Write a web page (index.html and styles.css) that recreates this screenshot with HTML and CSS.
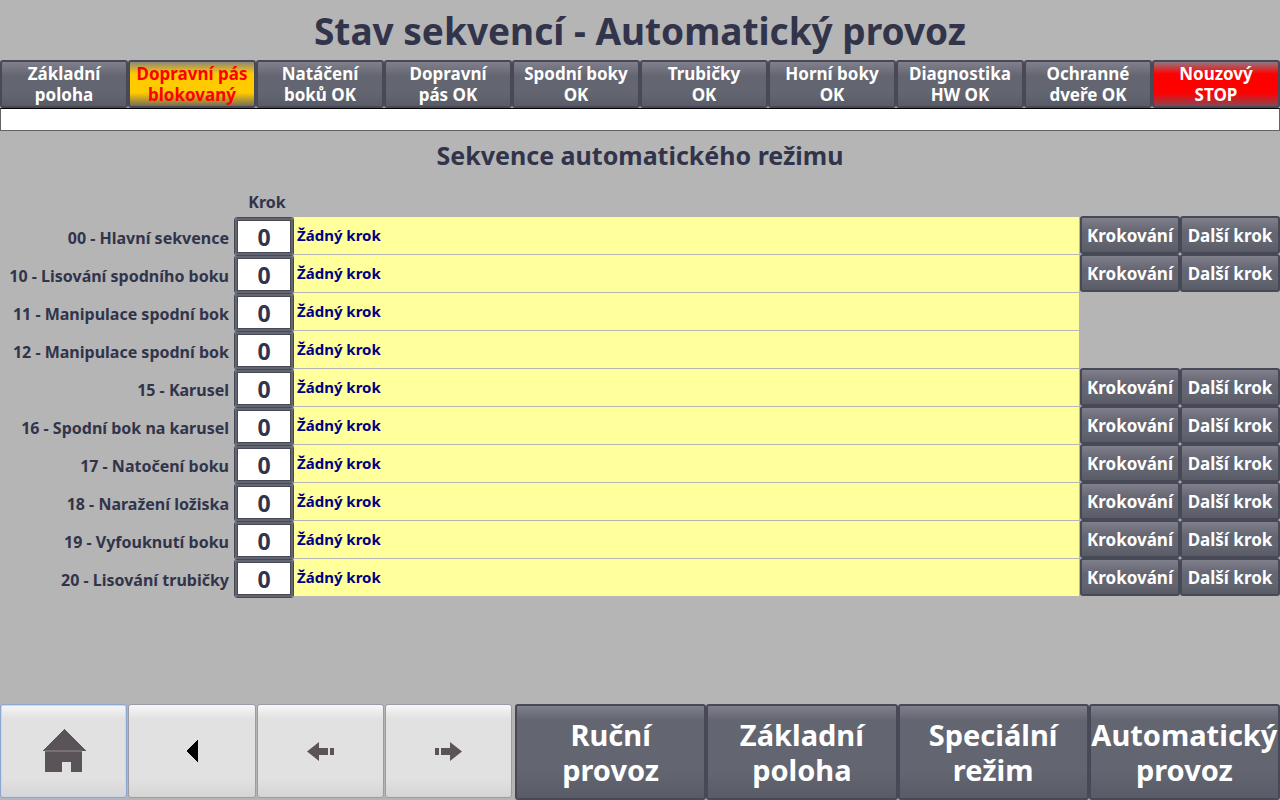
FILE: index.html
```html
<!DOCTYPE html>
<html lang="cs">
<head>
    <meta charset="UTF-8">
    <meta name="viewport" content="width=device-width, initial-scale=1.0">
    <title>Stav sekvencí</title>
    <link rel="stylesheet" href="styles.css">
</head>
<body>
    <h1>Stav sekvencí - Automatický provoz</h1>

    <div class="status">
        <button type="button" class="btn">Základní<br>poloha</button>
        <button type="button" class="btn warning">Dopravní pás<br>blokovaný</button>
        <button type="button" class="btn">Natáčení<br>boků OK</button>
        <button type="button" class="btn">Dopravní<br>pás OK</button>
        <button type="button" class="btn">Spodní boky<br>OK</button>
        <button type="button" class="btn">Trubičky<br>OK</button>
        <button type="button" class="btn">Horní boky<br>OK</button>
        <button type="button" class="btn">Diagnostika<br>HW OK</button>
        <button type="button" class="btn">Ochranné<br>dveře OK</button>
        <button type="button" class="btn alarm">Nouzový<br>STOP</button>
    </div>
    <div class="message" role="status"></div>

    <h2>Sekvence automatického režimu</h2>
    <table class="sequences">
        <colgroup>
            <col class="col-name">
            <col class="col-step">
            <col>
            <col class="col-button">
            <col class="col-button">
        </colgroup>
        <thead>
            <tr>
                <td></td>
                <th scope="col">Krok</th>
                <td></td>
                <td></td>
                <td></td>
            </tr>
        </thead>
        <tbody>
            <tr>
                <th scope="row"><label for="step00">00 - Hlavní sekvence</label></th>
                <td><input type="text" id="step00" value="0" readonly></td>
                <td><div class="text">Žádný krok</div></td>
                <td><button type="button" class="btn">Krokování</button></td>
                <td><button type="button" class="btn">Další krok</button></td>
            </tr>
            <tr>
                <th scope="row"><label for="step10">10 - Lisování spodního boku</label></th>
                <td><input type="text" id="step10" value="0" readonly></td>
                <td><div class="text">Žádný krok</div></td>
                <td><button type="button" class="btn">Krokování</button></td>
                <td><button type="button" class="btn">Další krok</button></td>
            </tr>
            <tr>
                <th scope="row"><label for="step11">11 - Manipulace spodní bok</label></th>
                <td><input type="text" id="step11" value="0" readonly></td>
                <td><div class="text">Žádný krok</div></td>
                <td></td>
                <td></td>
            </tr>
            <tr>
                <th scope="row"><label for="step12">12 - Manipulace spodní bok</label></th>
                <td><input type="text" id="step12" value="0" readonly></td>
                <td><div class="text">Žádný krok</div></td>
                <td></td>
                <td></td>
            </tr>
            <tr>
                <th scope="row"><label for="step15">15 - Karusel</label></th>
                <td><input type="text" id="step15" value="0" readonly></td>
                <td><div class="text">Žádný krok</div></td>
                <td><button type="button" class="btn">Krokování</button></td>
                <td><button type="button" class="btn">Další krok</button></td>
            </tr>
            <tr>
                <th scope="row"><label for="step16">16 - Spodní bok na karusel</label></th>
                <td><input type="text" id="step16" value="0" readonly></td>
                <td><div class="text">Žádný krok</div></td>
                <td><button type="button" class="btn">Krokování</button></td>
                <td><button type="button" class="btn">Další krok</button></td>
            </tr>
            <tr>
                <th scope="row"><label for="step17">17 - Natočení boku</label></th>
                <td><input type="text" id="step17" value="0" readonly></td>
                <td><div class="text">Žádný krok</div></td>
                <td><button type="button" class="btn">Krokování</button></td>
                <td><button type="button" class="btn">Další krok</button></td>
            </tr>
            <tr>
                <th scope="row"><label for="step18">18 - Naražení ložiska</label></th>
                <td><input type="text" id="step18" value="0" readonly></td>
                <td><div class="text">Žádný krok</div></td>
                <td><button type="button" class="btn">Krokování</button></td>
                <td><button type="button" class="btn">Další krok</button></td>
            </tr>
            <tr>
                <th scope="row"><label for="step19">19 - Vyfouknutí boku</label></th>
                <td><input type="text" id="step19" value="0" readonly></td>
                <td><div class="text">Žádný krok</div></td>
                <td><button type="button" class="btn">Krokování</button></td>
                <td><button type="button" class="btn">Další krok</button></td>
            </tr>
            <tr>
                <th scope="row"><label for="step20">20 - Lisování trubičky</label></th>
                <td><input type="text" id="step20" value="0" readonly></td>
                <td><div class="text">Žádný krok</div></td>
                <td><button type="button" class="btn">Krokování</button></td>
                <td><button type="button" class="btn">Další krok</button></td>
            </tr>
        </tbody>
    </table>

    <nav>
        <div class="icons">
            <button type="button" class="icon-btn active" aria-label="Domů">
                <svg width="44" height="44" viewBox="0 0 44 44" shape-rendering="crispEdges">
                    <path d="M22 0 L44 22 H0 Z" fill="#5a5357"/>
                    <path d="M3 21 H40 V43 H29 V33 H20 V43 H3 Z" fill="#5a5357"/>
                    <path d="M3 21 H40 V23 H3 Z" fill="#777074"/>
                </svg>
            </button>
            <button type="button" class="icon-btn" aria-label="Zpět">
                <svg width="12" height="24" viewBox="0 0 12 24" shape-rendering="crispEdges">
                    <path d="M12 0 V24 L0 12 Z" fill="#000"/>
                </svg>
            </button>
            <button type="button" class="icon-btn" aria-label="Předchozí">
                <svg width="27" height="19" viewBox="0 0 27 19">
                    <path d="M0 9.500 L12 0 V6 H21 V13 H12 V19 Z M23 6 H27 V13 H23 Z" fill="#5a5357"/>
                </svg>
            </button>
            <button type="button" class="icon-btn" aria-label="Další">
                <svg width="27" height="19" viewBox="0 0 27 19">
                    <path d="M27 9.500 L15 0 V6 H6 V13 H15 V19 Z M4 6 H0 V13 H4 Z" fill="#5a5357"/>
                </svg>
            </button>
        </div>
        <div class="modes">
            <button type="button" class="btn">Ruční<br>provoz</button>
            <button type="button" class="btn">Základní<br>poloha</button>
            <button type="button" class="btn">Speciální<br>režim</button>
            <button type="button" class="btn">Automatický<br>provoz</button>
        </div>
    </nav>
</body>
</html>
```
FILE: styles.css
```css
* {
    box-sizing: border-box;
}
body {
    display: flex;
    flex-direction: column;
    min-height: 100vh;
    margin: 0;
    background-color: #b5b5b5;
    color: #31344a;
    font-family: "Noto Sans", Tahoma, sans-serif;
    font-weight: bold;
}
h1 {
    margin: 0;
    padding: 3px 0 1px;
    font-size: 37px;
    line-height: 56px;
    text-align: center;
}
h2 {
    margin: 8px 0 20px;
    font-size: 25px;
    line-height: 32px;
    text-align: center;
}
button {
    margin: 0;
    padding: 0;
    font-family: inherit;
    font-weight: bold;
}
.btn {
    border: 2px solid #474957;
    border-radius: 3px;
    background: linear-gradient(#7f808c, #636570 14px, #636570 70%, #595b67);
    color: #fff;
    font-size: 17px;
    line-height: 21px;
    white-space: nowrap;
}

/* status row */
.status {
    display: grid;
    grid-template-columns: repeat(10, 1fr);
}
.status .btn {
    height: 48px;
}
.status .warning {
    background: linear-gradient(#8f8878, #ffcb00 12px, #ffcb00 70%, #776b58);
    color: #f00;
}
.status .alarm {
    background: linear-gradient(#8f7880, #f00 12px, #f00 70%, #8a4553);
}
.message {
    height: 23px;
    border: 1px solid #636363;
    border-top-color: #000;
    background-color: #fff;
}

/* sequence table */
.sequences {
    width: 100%;
    table-layout: fixed;
    border-collapse: collapse;
}
.sequences th,
.sequences td {
    padding: 0;
    vertical-align: top;
}
.sequences thead th,
.sequences thead td {
    height: 26px;
    font-size: 16px;
    line-height: 22px;
    padding-left: 6px;
}
.sequences tbody tr {
    height: 38px;
}
.sequences tbody th {
    padding: 10px 5px 0 0;
    font-size: 16px;
    line-height: 22px;
    text-align: right;
    white-space: nowrap;
}
.col-name {
    width: 234px;
}
.col-step {
    width: 60px;
}
.col-button {
    width: 100px;
}
.sequences input {
    display: block;
    width: 60px;
    height: 39px;
    margin: 0 0 -1px;
    padding: 0;
    border: 1px solid #474957;
    border-radius: 3px;
    outline: 1px solid #474957;
    outline-offset: -4px;
    box-shadow: inset 0 0 0 2px #636570;
    background-color: #fff;
    color: #31344a;
    font-family: inherit;
    font-size: 23px;
    font-weight: bold;
    text-align: center;
}
.text {
    height: 37px;
    margin-right: 1px;
    padding: 7px 3px;
    background-color: #ffff9c;
    color: #000084;
    font-size: 15px;
    line-height: 23px;
}
.sequences .btn {
    display: block;
    width: 100%;
    height: 38px;
    margin-top: -1px;
}

/* bottom bar */
nav {
    display: flex;
    gap: 3px;
    margin-top: auto;
}
.icons {
    display: grid;
    grid-template-columns: repeat(4, 1fr);
    align-items: start;
    gap: 1px;
    width: 40%;
}
.modes {
    display: grid;
    grid-template-columns: repeat(4, 1fr);
    flex: 1;
}
.icon-btn {
    display: flex;
    align-items: center;
    justify-content: center;
    height: 94px;
    border: 1px solid #9c9aa5;
    border-radius: 3px;
    background: linear-gradient(#f7f7f7, #e1e1e1 14px, #e1e1e1 80%, #d6d5d6);
}
.icon-btn.active {
    border: 1px solid #8ca6d6;
    box-shadow: inset 0 0 0 1px #c6d7ef;
}
.modes .btn {
    height: 96px;
    font-size: 29px;
    line-height: 35px;
}
```
